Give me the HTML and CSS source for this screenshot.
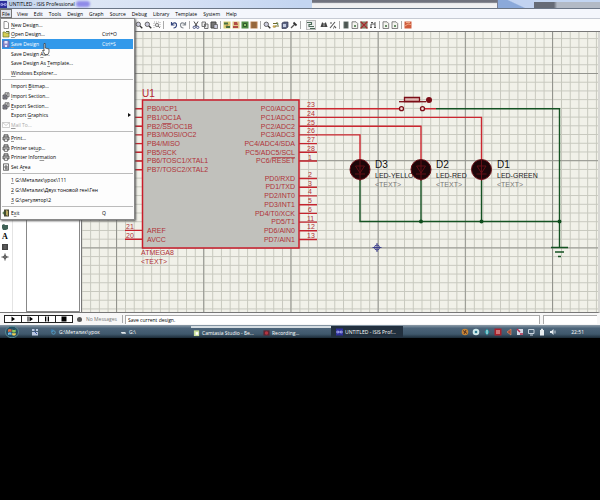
FILE: index.html
```html
<!DOCTYPE html>
<html lang="en">
<head>
<meta charset="utf-8">
<title>UNTITLED - ISIS Professional</title>
<link rel="stylesheet" href="styles.css">
</head>
<body>
<svg class="defs" aria-hidden="true">
  <symbol id="i-page" viewBox="0 0 8 8"><path d="M2 .5h3l1.500 1.500v5.500H2z" fill="#fff" stroke="#777" stroke-width=".8"/></symbol>
  <symbol id="i-open" viewBox="0 0 8 8"><path d="M1 2h2l1 1h3v4H1z" fill="#d6cf55" stroke="#66752c" stroke-width=".7"/><path d="M4 1.500h3v2" fill="none" stroke="#5a6a35"/></symbol>
  <symbol id="i-save" viewBox="0 0 8 8"><path d="M1 1h6v6H1z" fill="#8d8ccc" stroke="#6560a8" stroke-width=".8"/><path d="M2.500 1h3v2.500h-3zM3 5h2v2H3z" fill="#e8e8fa"/></symbol>
  <symbol id="i-section" viewBox="0 0 8 8"><path d="M3 .8h4v4H3z" fill="#e4e4e4" stroke="#555" stroke-width=".8"/><path d="M1 3h4v4H1z" fill="#9a9aa8" stroke="#444" stroke-width=".8"/><path d="M2 5h2M5 2h1" stroke="#333" stroke-width=".8"/></symbol>
  <symbol id="i-mail" viewBox="0 0 8 8"><path d="M.5 1.500h7v5h-7zL4 4.500l3.500-3" fill="#fff" stroke="#bbb" stroke-width=".7"/></symbol>
  <symbol id="i-print" viewBox="0 0 8 8"><path d="M2 3V.8h4V3M1 3h6v3H1z" fill="#bbb" stroke="#444" stroke-width=".8"/><path d="M2.500 5h3v2.500h-3z" fill="#eee" stroke="#444" stroke-width=".6"/></symbol>
  <symbol id="i-area" viewBox="0 0 8 8"><path d="M1.500 .8h5v6.500h-5z" fill="#eee" stroke="#555" stroke-width=".8"/><path d="M3 3h2v2H3zM3 6h3" fill="none" stroke="#444" stroke-width=".8"/></symbol>
  <symbol id="i-exit" viewBox="0 0 8 8"><path d="M2 .5h5v7H2z" fill="#4a4a36"/><path d="M4 1l2 1v5L4 6z" fill="#b8a860"/><path d="M.5 4h3M2 2.500v3" stroke="#355a2a"/></symbol>
  <symbol id="i-zoom" viewBox="0 0 8 8"><circle cx="3.300" cy="3.300" r="2.200" fill="#ccd" stroke="#666"/><path d="M5 5l2.300 2.300" stroke="#333" stroke-width="1.300"/></symbol>
  <symbol id="i-zoomarea" viewBox="0 0 8 8"><path d="M1 7V1h6v6" fill="none" stroke="#aaa" stroke-dasharray="1 1"/><circle cx="4" cy="4" r="1.700" fill="#ddd" stroke="#888"/><path d="M5 5l2 2" stroke="#777"/></symbol>
  <symbol id="i-undo" viewBox="0 0 8 8"><path d="M1.500 1v3h3M2 3.500c2-3 5-1.500 4.500 1C6.300 6 5 7 3.500 7" fill="none" stroke="#34457c" stroke-width="1.200"/></symbol>
  <symbol id="i-redo" viewBox="0 0 8 8"><path d="M6.500 1v3h-3M6 3.500c-2-3-5-1.500-4.500 1C1.700 6 3 7 4.500 7" fill="none" stroke="#858b92" stroke-width="1.200"/></symbol>
  <symbol id="i-cut" viewBox="0 0 8 8"><path d="M2 .5l3 5M6 .5l-3 5" stroke="#444" /><circle cx="2.300" cy="6.300" r="1.200" fill="none" stroke="#4d5787"/><circle cx="5.700" cy="6.300" r="1.200" fill="none" stroke="#4d5787"/></symbol>
  <symbol id="i-copy" viewBox="0 0 8 8"><path d="M1 1h3.500v4.500H1zM3.500 3H7v4.500H3.500z" fill="#eee" stroke="#666" stroke-width=".9"/></symbol>
  <symbol id="i-paste" viewBox="0 0 8 8"><path d="M1 1h5v6H1z" fill="#777" stroke="#444"/><path d="M4 3.500h3.500v4H4z" fill="#ccd" stroke="#555" stroke-width=".7"/></symbol>
  <symbol id="i-block1" viewBox="0 0 8 8"><path d="M.5 .5h7v7h-7z" fill="#d8cd72"/><path d="M1 1.500h4v2H1zM3 5h4v2H3z" fill="#4a7040"/><path d="M5 3.500l-2 2" stroke="#a63"/></symbol>
  <symbol id="i-block2" viewBox="0 0 8 8"><path d="M.5 .5h7v7h-7z" fill="#e0c788"/><path d="M2 1h3l1 3H2zM1 5h5v2H1z" fill="#b24c46"/></symbol>
  <symbol id="i-block3" viewBox="0 0 8 8"><path d="M.5 .5h7v7h-7z" fill="#4f8b45"/><path d="M2.500 2.500h3v3h-3z" fill="#8fc46c" stroke="#2d5a2a"/></symbol>
  <symbol id="i-block4" viewBox="0 0 8 8"><path d="M.5 .5h7v7h-7z" fill="#bb8050"/><path d="M1.500 2h5M1.500 4h5M1.500 6h5" stroke="#71502d"/></symbol>
  <symbol id="i-wire" viewBox="0 0 8 8"><path d="M1 2.500h4V1M3 6.500V5h4" fill="none" stroke="#6c6a2a"/><circle cx="2" cy="5.500" r="1.300" fill="#c8a44c"/><path d="M5 2l2 1-2 1" fill="#474"/></symbol>
  <symbol id="i-cube" viewBox="0 0 8 8"><path d="M1 2l2-1h4v5L5 7.500H1z" fill="#5b6382" stroke="#333a55" stroke-width=".7"/><path d="M2 3h3v3H2z" fill="#c4cce0"/></symbol>
  <symbol id="i-hammer" viewBox="0 0 8 8"><path d="M1 7l4-4" stroke="#555" stroke-width="1.300"/><path d="M3.500 1.500L6.500 4.500" stroke="#333" stroke-width="1.800"/></symbol>
  <symbol id="i-auto" viewBox="0 0 8 8"><path d="M0 1.500h4.500v2H2v2h5M3 7.500h5" fill="none" stroke="#4b6b58" stroke-width="1.100"/></symbol>
  <symbol id="i-find" viewBox="0 0 8 8"><path d="M.5 6l1.500-4.500h1L4 6zM4 6l1-4.500h1L7.500 6z" fill="#444"/><path d="M3 3h2" stroke="#444"/></symbol>
  <symbol id="i-prop" viewBox="0 0 8 8"><path d="M1 7l5-6M1 2h2M5 5l2 2M4 7h1" stroke="#555" stroke-width="1.100"/></symbol>
  <symbol id="i-list" viewBox="0 0 8 8"><path d="M1.500 .5h5v7h-5z" fill="#63706a"/><path d="M2.500 2h3M2.500 4h3M2.500 6h3" stroke="#222" stroke-width=".7"/></symbol>
  <symbol id="i-doc" viewBox="0 0 8 8"><path d="M1 .8h4l1.700 1.700v5H1z" fill="#f4f4ee" stroke="#666" stroke-width=".8"/><path d="M3 5h2M4 4v2" stroke="#3b6c3b"/></symbol>
  <symbol id="i-del" viewBox="0 0 8 8"><path d="M1 1h6v6H1z" fill="#a8837c" stroke="#675"/><path d="M.5 .5l7 7M7.500 .5l-7 7" stroke="#a22b2b" stroke-width="1.200"/></symbol>
  <symbol id="i-tree" viewBox="0 0 8 8"><path d="M2 7V3h4V1M6 3v4M1 6.500h2M5 6.500h2M2 1.500h2" fill="none" stroke="#555"/></symbol>
  <symbol id="i-ares" viewBox="0 0 8 8"><path d="M.5 .5h7v7h-7z" fill="#cf5b3d"/><path d="M1 5l3-2 3 .5M2 1.500h4" fill="none" stroke="#f0a884"/></symbol>
  <symbol id="i-isis" viewBox="0 0 8 8"><path d="M0 0h8v8H0z" fill="#2d2f9c"/><path d="M1 3h2v2H1zM5 3h2v2H5zM3 4h2" fill="none" stroke="#c3c6ff" stroke-width=".8"/></symbol>
</svg>

<main class="window">
  <header class="titlebar">
    <svg class="app-icon"><use href="#i-isis"/></svg>
    <h1>UNTITLED - ISIS Professional</h1>
    <span class="glass-glow"></span>
    <span class="glass-window"></span>
    <span class="glass-sky"></span>
    <span class="glass-tab"></span>
  </header>

  <nav class="menubar">
    <button class="open">File</button><button>View</button><button>Edit</button><button>Tools</button><button>Design</button><button>Graph</button><button>Source</button><button>Debug</button><button>Library</button><button>Template</button><button>System</button><button>Help</button>
  </nav>

  <div class="toolbar">
    <div class="group wide"><button aria-label="Zoom in"><svg><use href="#i-zoom"/></svg></button><button aria-label="Zoom out"><svg><use href="#i-zoom"/></svg></button><button aria-label="Zoom area"><svg><use href="#i-zoomarea"/></svg></button></div>
    <div class="group"><button aria-label="Undo"><svg><use href="#i-undo"/></svg></button><button aria-label="Redo"><svg><use href="#i-redo"/></svg></button></div>
    <div class="group"><button aria-label="Cut"><svg><use href="#i-cut"/></svg></button><button aria-label="Copy"><svg><use href="#i-copy"/></svg></button><button aria-label="Paste"><svg><use href="#i-paste"/></svg></button></div>
    <div class="group"><button aria-label="Block copy"><svg><use href="#i-block1"/></svg></button><button aria-label="Block move"><svg><use href="#i-block2"/></svg></button><button aria-label="Block rotate"><svg><use href="#i-block3"/></svg></button><button aria-label="Block delete"><svg><use href="#i-block4"/></svg></button></div>
    <div class="group wide"><button aria-label="Pick device"><svg><use href="#i-zoom"/></svg></button><button aria-label="Make device"><svg><use href="#i-wire"/></svg></button><button aria-label="Packaging"><svg><use href="#i-cube"/></svg></button><button aria-label="Decompose"><svg><use href="#i-hammer"/></svg></button></div>
    <div class="group"><button class="pressed" aria-label="Wire autorouter"><svg><use href="#i-auto"/></svg></button><button aria-label="Search"><svg><use href="#i-find"/></svg></button><button aria-label="Property assignment"><svg><use href="#i-prop"/></svg></button></div>
    <div class="group"><button aria-label="Design explorer"><svg><use href="#i-list"/></svg></button><button aria-label="New sheet"><svg><use href="#i-doc"/></svg></button><button aria-label="Remove sheet"><svg><use href="#i-del"/></svg></button><button aria-label="Goto sheet"><svg><use href="#i-tree"/></svg></button></div>
    <div class="group"><button aria-label="Bill of materials"><svg><use href="#i-doc"/></svg></button><button aria-label="Electrical rules"><svg><use href="#i-doc"/></svg></button></div>
    <div class="group"><button aria-label="Netlist to ARES"><svg><use href="#i-ares"/></svg></button></div>
  </div>

  <section class="workspace">
    <div class="modes">
      <button aria-label="Closed path"><svg viewBox="0 0 8 8"><path d="M1 2l2-1 1 1h3v4L5 7H2L1 5z" fill="#3f6156"/></svg></button>
      <button aria-label="Text">A</button>
      <button aria-label="Symbol"><svg viewBox="0 0 8 8"><path d="M1 1h6v6H1z" fill="#444"/><path d="M2.500 3h3M2.500 5h3" stroke="#888" stroke-width=".7"/></svg></button>
      <button aria-label="Marker"><svg viewBox="0 0 8 8"><path d="M4 .5v7M.5 4h7" stroke="#444"/><circle cx="4" cy="4" r="1.500" fill="#777" stroke="#444" stroke-width=".7"/></svg></button>
    </div>
    <div class="devices"></div>
    <svg class="sheet" role="img" aria-label="Schematic">
      <defs>
        <pattern id="minor" x="34.300" y="41" width="8.720" height="8.720" patternUnits="userSpaceOnUse"><path d="M0 .5h8.720M.5 0v8.720" stroke="#c7c8be" stroke-width="1"/></pattern>
        <pattern id="major" x="34" y="41" width="87.200" height="87.200" patternUnits="userSpaceOnUse"><path d="M0 .5h87.200M.5 0v87.200" stroke="#93948e" stroke-width="1"/></pattern>
      </defs>
      <rect width="100%" height="100%" fill="#f1f1e9"/>
      <rect width="100%" height="100%" fill="url(#minor)"/>
      <rect width="100%" height="100%" fill="url(#major)"/>
      <!-- Drawing uses window coordinates, shifted to the sheet origin -->
      <g transform="translate(-82 -32)">
        <rect x="142.500" y="100" width="156.500" height="148" fill="#c1c1bc" stroke="#c91d2b" stroke-width="1.500"/>
        <path class="pin" d="M125 108.700h17M125 117.400h17M125 126.200h17M125 134.900h17M125 143.600h17M125 152.300h17M125 161h17M125 169.800h17M125 230.400h17M125 239.200h17"/>
        <path class="pin" d="M299 108.700h18M299 117.400h18M299 126.200h18M299 134.900h18M299 143.600h18M299 152.300h18M299 161h18M299 178.500h18M299 187.200h18M299 195.900h18M299 204.700h18M299 213.400h18M299 222.100h18M299 230.800h18M299 239.500h18"/>
        <text class="ref red" x="142" y="97">U1</text>
        <g class="label">
          <text x="147" y="111">PB0/ICP1</text><text x="147" y="120">PB1/OC1A</text><text x="147" y="129">PB2/<tspan class="over">SS</tspan>/OC1B</text><text x="147" y="137">PB3/MOSI/OC2</text><text x="147" y="146">PB4/MISO</text><text x="147" y="155">PB5/SCK</text><text x="147" y="163">PB6/TOSC1/XTAL1</text><text x="147" y="172">PB7/TOSC2/XTAL2</text>
          <text x="147" y="233">AREF</text><text x="147" y="242">AVCC</text>
          <text x="141" y="255">ATMEGA8</text><text x="141" y="264">&lt;TEXT&gt;</text>
        </g>
        <g class="label end">
          <text x="295" y="111">PC0/ADC0</text><text x="295" y="120">PC1/ADC1</text><text x="295" y="129">PC2/ADC2</text><text x="295" y="137">PC3/ADC3</text><text x="295" y="146">PC4/ADC4/SDA</text><text x="295" y="155">PC5/ADC5/SCL</text><text x="295" y="163">PC6/<tspan class="over">RESET</tspan></text>
          <text x="295" y="181">PD0/RXD</text><text x="295" y="189">PD1/TXD</text><text x="295" y="198">PD2/INT0</text><text x="295" y="207">PD3/INT1</text><text x="295" y="216">PD4/T0/XCK</text><text x="295" y="224">PD5/T1</text><text x="295" y="233">PD6/AIN0</text><text x="295" y="242">PD7/AIN1</text>
        </g>
        <g class="label">
          <text x="307" y="107">23</text><text x="307" y="116">24</text><text x="307" y="125">25</text><text x="307" y="133">26</text><text x="307" y="142">27</text><text x="307" y="151">28</text><text x="308" y="160">1</text>
          <text x="308" y="177">2</text><text x="308" y="186">3</text><text x="308" y="194">4</text><text x="308" y="203">5</text><text x="308" y="212">6</text><text x="307" y="221">11</text><text x="307" y="229">12</text><text x="307" y="238">13</text>
          <text x="126" y="229">21</text><text x="126" y="238">20</text>
        </g>
        <path class="wire-red" d="M316 108.700h83.500M316 117.400h165.500V160M316 126.200h105V160M316 134.900h44V160M425 108.700h11"/>
        <path class="wire-green" d="M436 108.700h123.500V247M360 180v41.500h199.500M421 180v41.500M481.500 180v41.500M551 247.500h17M555 252h9M558 256.500h3"/>
        <g fill="#0e4d1c"><circle cx="421" cy="221.500" r="2"/><circle cx="481.500" cy="221.500" r="2"/><circle cx="559.500" cy="221.500" r="2"/></g>
        <g fill="none" stroke="#7b0d17" stroke-width="1.300">
          <circle cx="401.500" cy="108.700" r="2" fill="#f3d9d5"/><circle cx="422.500" cy="108.700" r="2" fill="#f3d9d5"/>
          <path d="M404.500 101.500v-4h15v4z" fill="#dfb9b5"/><path d="M399 101.700h27"/>
        </g>
        <circle cx="429" cy="100" r="3" fill="#7b0d17"/>
        <text class="ref" x="375" y="168">D3</text><text class="ref" x="436" y="168">D2</text><text class="ref" x="497" y="168">D1</text>
        <g class="label dark"><text x="375" y="178">LED-YELLOW</text><text x="436" y="178">LED-RED</text><text x="497" y="178">LED-GREEN</text></g>
        <g class="label gray"><text x="375" y="187">&lt;TEXT&gt;</text><text x="436" y="187">&lt;TEXT&gt;</text><text x="497" y="187">&lt;TEXT&gt;</text></g>
        <g fill="#1d0609" stroke="#6c0d16">
          <circle cx="360" cy="169.500" r="10"/><circle cx="421" cy="169.500" r="10"/><circle cx="481.500" cy="169.500" r="10"/>
        </g>
        <path d="M360 160v21M421 160v21M481.500 160v21M355.500 166h9l-4.500 7zM416.500 166h9l-4.500 7zM477 166h9l-4.500 7zM355 174h10M416 174h10M476.500 174h10" fill="none" stroke="#6a1119" stroke-width=".9"/>
        <g fill="none" stroke="#3c3f8c"><circle cx="377" cy="247.500" r="2.500"/><path d="M372.500 247.500h9M377 243v9"/></g>
      </g>
    </svg>
  </section>

  <footer class="statusbar">
    <div class="play">
      <button aria-label="Play"><svg viewBox="0 0 8 6"><path d="M2.500 .5L6 3 2.500 5.500z"/></svg></button><button aria-label="Step"><svg viewBox="0 0 8 6"><path d="M3.500 .5L7 3 3.500 5.500zM1.500 .5h1v5h-1z"/></svg></button><button aria-label="Pause"><svg viewBox="0 0 8 6"><path d="M2 .5h1.300v5H2zM4.700 .5H6v5H4.700z"/></svg></button><button aria-label="Stop"><svg viewBox="0 0 8 6"><path d="M1.500 .5h5v5h-5z"/></svg></button>
    </div>
    <div class="messages"><span class="info"></span>No Messages</div>
    <output class="hint">Save current design.</output>
    <div class="coords"></div>
  </footer>

  <nav class="taskbar">
    <button class="start" aria-label="Start"><svg viewBox="0 0 14 12"><ellipse cx="7" cy="6" rx="6.500" ry="5.800" fill="#244e63" stroke="#5b8b93"/><path d="M3 3.500q2-1.200 3.500 0V6Q5 5 3 6z" fill="#e26a3b"/><path d="M7.200 3.500q2 1 3.500 0V6q-2 1-3.500 0z" fill="#8fc95a"/><path d="M3 6.800q2-1 3.500 0V9Q5 8 3 9z" fill="#6fb6e8"/><path d="M7.200 6.800q2 1 3.500 0V9q-2 1-3.500 0z" fill="#f0d257"/></svg></button>
    <button class="quick" aria-label="Quick launch"><svg viewBox="0 0 8 8"><path d="M1 1h2.500v2H1zM5 1h2v2H5zM1 4h6v3.500H1z" fill="#b9c7e0"/><path d="M3 3l3 3" stroke="#37539c"/></svg></button>
    <button class="task folder"><svg viewBox="0 0 8 8"><path d="M1 1h3v3H1z" fill="#3979a8"/><circle cx="4" cy="4.500" r="2" fill="none" stroke="#58a0c8"/></svg><span>G:\Металик\урок</span></button>
    <button class="task drive"><svg viewBox="0 0 8 8"><path d="M1 4h5l1 2H2z" fill="#dfe6ea"/></svg><span>G:\</span></button>
    <button class="task light"><svg viewBox="0 0 8 8"><path d="M1 1h6v6.500H1z" fill="#c9e09a"/><path d="M3 3h3v3H3z" fill="#fff"/></svg><span>Camtasia Studio - Бе...</span></button>
    <button class="task light rec"><svg viewBox="0 0 8 8"><path d="M.5 1h7v6h-7z" fill="#5e2430"/><circle cx="4" cy="4" r="2" fill="#b23642"/></svg><span>Recording...</span></button>
    <button class="task active"><svg><use href="#i-isis"/></svg><span>UNTITLED - ISIS Prof...</span></button>
    <div class="tray">
      <svg viewBox="0 0 8 8"><circle cx="4" cy="4" r="3.300" fill="#c78434"/><path d="M2 2.500l4 3M5 2L3 6" stroke="#532"/></svg>
      <svg viewBox="0 0 8 8"><circle cx="4" cy="4" r="3.300" fill="#cfe9ea"/><circle cx="4" cy="4" r="1.300" fill="#2f7d93"/></svg>
      <svg viewBox="0 0 8 8"><path d="M4 .5L6.500 4 4 7.500 1.500 4z" fill="#2d9aa6"/><path d="M4 2v4" stroke="#d6f4f4"/></svg>
      <svg viewBox="0 0 8 8"><path d="M.5 .5h7v7h-7z" fill="#a8202a"/><path d="M2 3h4M2 5h4" stroke="#f1c4c0"/></svg>
      <svg viewBox="0 0 8 8"><path d="M6 1L2 4l4 3z" fill="#a8482e" stroke="#d48f70" stroke-width=".7"/></svg>
      <svg viewBox="0 0 8 8"><path d="M1 1h6v6H1z" fill="#d4d8e4"/><path d="M1 1l3 3M4 6h3" stroke="#b22a4a" stroke-width="1.500"/></svg>
      <svg viewBox="0 0 8 8"><path d="M1.500 1.500h5.500v4H1.500zM3 7h3" fill="none" stroke="#c7d2dc"/></svg>
      <svg viewBox="0 0 8 8"><path d="M2 2h4v5.500H2zM3 .8h2V2H3z" fill="#e6ecf0"/></svg>
      <svg viewBox="0 0 8 8"><path d="M1 3h1.500l2-2v6l-2-2H1z" fill="#e6ecf0"/><path d="M6 2.500v3" stroke="#c7d2dc"/></svg>
    </div>
    <time>22:51</time>
  </nav>

  <div class="menu" role="menu">
    <button role="menuitem"><svg><use href="#i-page"/></svg><span><u>N</u>ew Design...</span></button>
    <button role="menuitem"><svg><use href="#i-open"/></svg><span><u>O</u>pen Design...</span><kbd>Ctrl+O</kbd></button>
    <button role="menuitem" class="selected"><svg><use href="#i-save"/></svg><span><u>S</u>ave Design</span><kbd>Ctrl+S</kbd></button>
    <button role="menuitem"><i></i><span>Save Design <u>A</u>s...</span></button>
    <button role="menuitem"><i></i><span>Save Design As <u>T</u>emplate...</span></button>
    <button role="menuitem"><i></i><span><u>W</u>indows Explorer...</span></button>
    <hr>
    <button role="menuitem"><i></i><span>Import <u>B</u>itmap...</span></button>
    <button role="menuitem"><svg><use href="#i-section"/></svg><span><u>I</u>mport Section...</span></button>
    <button role="menuitem"><svg><use href="#i-section"/></svg><span><u>E</u>xport Section...</span></button>
    <button role="menuitem"><i></i><span>Export <u>G</u>raphics</span><b class="arrow"></b></button>
    <button role="menuitem" disabled><svg><use href="#i-mail"/></svg><span><u>M</u>ail To...</span></button>
    <hr>
    <button role="menuitem"><svg><use href="#i-print"/></svg><span><u>P</u>rint...</span></button>
    <button role="menuitem"><svg><use href="#i-print"/></svg><span>Printer set<u>u</u>p...</span></button>
    <button role="menuitem"><svg><use href="#i-print"/></svg><span>Printer Infor<u>m</u>ation</span></button>
    <button role="menuitem"><svg><use href="#i-area"/></svg><span>Set A<u>r</u>ea</span></button>
    <hr>
    <button role="menuitem"><i></i><span><u>1</u> G:\Металик\урок\111</span></button>
    <button role="menuitem"><i></i><span><u>2</u> G:\Металик\Двух тоновой ген\Ген</span></button>
    <button role="menuitem"><i></i><span><u>3</u> G:\регулятор\2</span></button>
    <hr>
    <button role="menuitem"><svg><use href="#i-exit"/></svg><span>E<u>x</u>it</span><kbd>Q</kbd></button>
  </div>
  <svg class="cursor" viewBox="0 0 8 12"><path d="M2 .5h1.200v4.500l3.800 1v3L6 11.500H3L.5 7.500l1-.5.500 1z" fill="#fff" stroke="#333" stroke-width=".7"/></svg>
</main>
</body>
</html>
```
FILE: styles.css
```css
* { box-sizing: border-box; }
body {
  margin: 0;
  background: #000;
  color: #000;
  font: 5px/8px "Open Sans", "Noto Sans", sans-serif;
}
button {
  margin: 0;
  padding: 0;
  border: 0;
  background: none;
  color: inherit;
  font: inherit;
  white-space: nowrap;
}
svg { display: block; width: 8px; height: 8px; flex: none; }
svg.defs { display: none; }
.window { position: relative; background: #fff; overflow: hidden; }

.titlebar {
  display: flex;
  align-items: center;
  height: 9px;
  overflow: hidden;
  background: linear-gradient(90deg, #b9cdea, #dfe8f5 12%, #d5e0f4 30%, #c3d5f1 50%);
  border-bottom: 1px solid #6b7686;
}
.titlebar h1 { margin: 0 0 0 2px; font: inherit; white-space: nowrap; }
.app-icon { width: 7px; height: 7px; }
.glass-glow { width: 14px; height: 6px; margin-left: 1px; border-radius: 3px; background: #8f8be8; filter: blur(1px); }
.glass-window { width: 31%; height: 9px; margin-left: auto; background: linear-gradient(#70727e 25%, #f0f0f2 40%); border-right: 1px solid #777c92; }
.glass-sky { width: 6%; height: 9px; background: linear-gradient(25deg, #8ba9da 50%, #c2d3f1 55%); }
.glass-tab { width: 11%; height: 6px; align-self: flex-end; background: linear-gradient(90deg, #666b76 30%, #b3bac5 35%); }

.menubar { display: flex; gap: 4px; height: 10px; background: #f4f6fc; border-bottom: 1px solid #c7cbd4; }
.menubar button { padding: 0 1px; }
.menubar .open { padding: 0 1px; border: 1px solid #777; background: #dfe2ea; line-height: 6px; }

.toolbar { display: flex; align-items: center; height: 13px; padding-left: 135px; background: #fdfdfd; border-bottom: 1px solid #777; }
.group { display: flex; gap: 1px; padding-right: 2px; margin-right: 2px; border-right: 1px solid #aaa; }
.group.wide { margin-right: 6px; }
.group:last-child { border: 0; }
.pressed { outline: 1px solid #bbb; background: #eee; margin-right: 4px; }

.workspace { display: flex; border-right: 2px solid #d8d8d4; border-bottom: 1px solid #777; }
.modes {
  display: flex;
  flex-direction: column;
  justify-content: flex-end;
  gap: 2px;
  width: 13px;
  padding: 0 0 51px 1px;
  border-right: 1px solid #e4e4e4;
}
.modes button { width: 8px; height: 8px; font: bold 8px/8px "Liberation Serif", serif; }
.devices { width: 54px; margin-left: 13px; border: 1px solid #888; border-top: 0; }
.sheet { flex: 1; min-width: 0; width: auto; height: 280px; margin-left: 1px; border-left: 1px solid #777; font-family: "Liberation Sans", Arial, sans-serif; }
.pin { stroke: #c4242e; stroke-width: 1.4px; }
.wire-red { fill: none; stroke: #cc2730; stroke-width: 1.4px; }
.wire-green { fill: none; stroke: #145222; stroke-width: 1.4px; }
.ref { font-size: 10px; fill: #111; }
.ref.red { fill: #b9262e; }
.label { font-size: 7px; fill: #b03238; }
.label.end { text-anchor: end; }
.label.dark { fill: #222; }
.label.gray { fill: #777; }
.over { text-decoration: overline; }

.statusbar { display: flex; align-items: center; height: 12px; padding: 0 3px 0 4px; background: #f7f7f7; }
.play { display: flex; }
.play button { display: grid; place-items: center; width: 18px; height: 8px; border: 1px solid #222; background: #fff; margin-right: -1px; }
.play svg { height: 6px; }
.messages { display: flex; align-items: center; gap: 4px; width: 46px; margin-left: 5px; color: #777; white-space: nowrap; border-right: 1px solid #aaa; }
.info { width: 5px; height: 5px; border-radius: 50%; background: #555; }
.hint { flex: 1; margin-left: 2px; padding-left: 2px; background: #fff; border: 1px solid #aaa; border-width: 1px 1px 0; }
.coords { width: 54px; height: 9px; margin-left: 3px; background: #fff; border: 1px solid #aaa; border-width: 1px 0 0 1px; }

.taskbar {
  display: flex;
  align-items: center;
  height: 13px;
  background: linear-gradient(#8d9daa, #4b6378 25%, #3f586c 70%, #1b2a36);
  color: #fff;
}
.start { margin-left: 5px; }
.start svg { width: 14px; height: 12px; }
.quick { margin: 0 11px 0 12px; }
.task { display: flex; align-items: center; gap: 2px; width: 68px; height: 12px; padding-left: 2px; overflow: hidden; }
.folder { padding-left: 0; }
.light { width: 70px; border-top: 2px solid #d5dde2; }
.drive { width: 73px; }
.active { width: 72px; padding-left: 5px; background: #22303e; }
.task svg { width: 7px; }
.tray { display: flex; gap: 3px; margin-left: auto; }
.taskbar time { margin: 0 16px 0 14px; }

.menu {
  position: absolute;
  top: 18px;
  left: 0;
  display: flex;
  flex-direction: column;
  width: 135px;
  height: 202px;
  padding: 1px;
  background: #fdfdfd;
  border: 1px solid #888;
  box-shadow: 1px 1px 2px #555;
}
.menu button { display: flex; align-items: center; gap: 1px; flex: 10; min-height: 0; text-align: left; }
.menu svg, .menu i { width: 8px; height: 8px; }
.menu u { text-underline-offset: 1px; text-decoration-thickness: 1px; text-decoration-color: #999; }
.menu hr { flex: 4; width: 100%; margin: 0; border: 0; background: linear-gradient(#bbb, #bbb) center / 100% 1px no-repeat; }
.menu .selected { background: #3399ea; color: #fff; }
.menu button:disabled { color: #aaa; }
.menu kbd { width: 31px; margin-left: auto; font: inherit; }
.arrow { margin: 0 2px 0 auto; border: 2px solid transparent; border-left: 3px solid #111; border-right: 0; }
.cursor { position: absolute; left: 42px; top: 43px; width: 8px; height: 12px; }
```
